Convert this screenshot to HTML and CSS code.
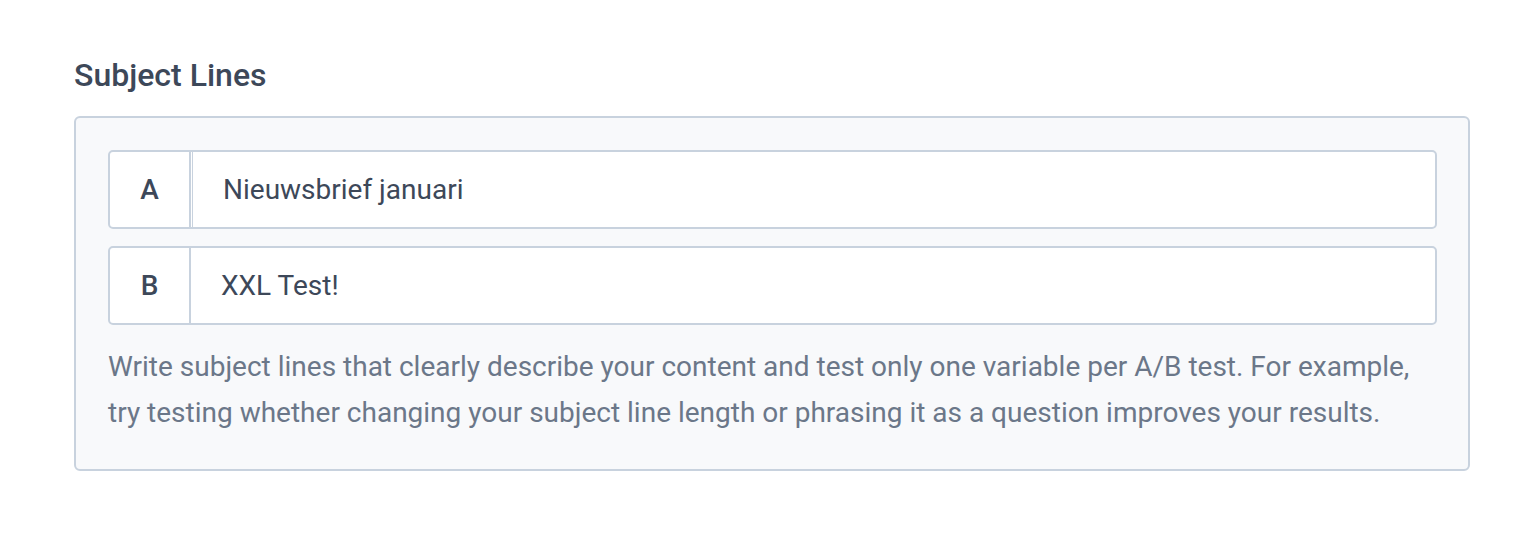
FILE: index.html
```html
<!DOCTYPE html>
<html>
<head>
<meta charset="utf-8">
<link rel="stylesheet" href="styles.css">
</head>
<body>
<div class="page">
  <h2 class="title">Subject Lines</h2>
  <div class="panel">
    <div class="row">
      <div class="label">A</div>
      <div class="input input-split">Nieuwsbrief januari</div>
    </div>
    <div class="row">
      <div class="label">B</div>
      <div class="input">XXL Test!</div>
    </div>
    <p class="help">Write subject lines that clearly describe your content and test only one variable per A/B test. For example, try testing whether changing your subject line length or phrasing it as a question improves your results.</p>
  </div>
</div>
</body>
</html>
```
FILE: styles.css
```css
* { box-sizing: border-box; }
body {
  margin: 0;
  background: #ffffff;
  font-family: Roboto, "Liberation Sans", sans-serif;
}
.page {
  padding: 57px 70px 0 74px;
}
.title {
  margin: 0 0 23px;
  font-size: 32px;
  line-height: 36px;
  font-weight: 500;
  color: #3d4859;
}
.panel {
  background: #f8f9fb;
  border: 2px solid #c8d2de;
  border-radius: 6px;
  padding: 32px 31px 33px 32px;
}
.row {
  display: flex;
  height: 79px;
  background: #ffffff;
  border: 2px solid #c8d2de;
  border-radius: 5px;
  margin-bottom: 17px;
}
.row:last-of-type { margin-bottom: 0; }
.label {
  width: 81px;
  flex: none;
  display: flex;
  align-items: center;
  justify-content: center;
  border-right: 2px solid #c8d2de;
  font-size: 28px;
  font-weight: 500;
  color: #3d4859;
}
.input {
  flex: 1;
  display: flex;
  align-items: center;
  padding-left: 30px;
  font-size: 28px;
  color: #3d4859;
}
.input-split {
  margin-left: 1px;
  border-left: 1px solid #c8d2de;
  padding-left: 30px;
}
.help {
  margin: 19px 0 0;
  font-size: 28px;
  line-height: 46px;
  color: #6b7789;
}
```
